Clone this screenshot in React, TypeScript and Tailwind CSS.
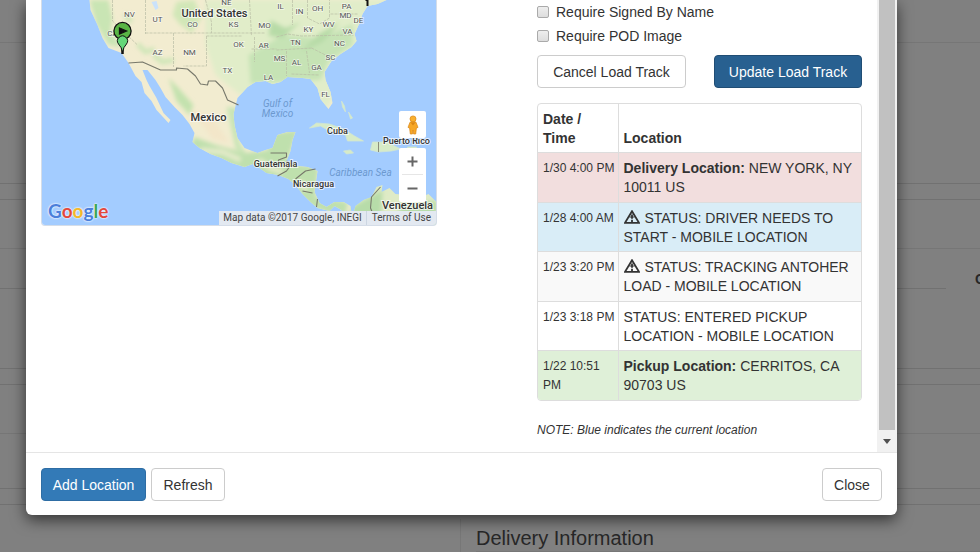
import React from "react";

type LogRow = {
  time: string;
  label?: string;
  text: string;
  warning?: boolean;
  tone: string;
};

const rows: LogRow[] = [
  { time: "1/30 4:00 PM", label: "Delivery Location:", text: "NEW YORK, NY 10011 US", tone: "bg-[#f2dede]" },
  { time: "1/28 4:00 AM", text: "STATUS: DRIVER NEEDS TO START - MOBILE LOCATION", warning: true, tone: "bg-[#d9edf7]" },
  { time: "1/23 3:20 PM", text: "STATUS: TRACKING ANTOHER LOAD - MOBILE LOCATION", warning: true, tone: "bg-[#f9f9f9]" },
  { time: "1/23 3:18 PM", text: "STATUS: ENTERED PICKUP LOCATION - MOBILE LOCATION", tone: "bg-white" },
  { time: "1/22 10:51 PM", label: "Pickup Location:", text: "CERRITOS, CA 90703 US", tone: "bg-[#dff0d8]" },
];

type MapLabel = [string, number, number];

const states: MapLabel[] = [
  ["NV", 129, 17], ["UT", 157, 22], ["NE", 226, 5], ["CO", 192, 27], ["KS", 233, 27],
  ["CA", 112, 36], ["AZ", 157, 55], ["NM", 189, 55], ["OK", 238, 47], ["TX", 227, 73],
  ["IL", 280, 9], ["IN", 299, 14], ["OH", 317, 11], ["PA", 346, 9], ["MD", 345, 18],
  ["DE", 358, 23], ["WV", 328, 27], ["KY", 308, 32], ["VA", 347, 34], ["MO", 264, 28],
  ["TN", 295, 45], ["NC", 339, 46], ["AR", 263, 48], ["SC", 330, 60], ["MS", 279, 61],
  ["AL", 296, 65], ["GA", 316, 70], ["LA", 268, 80], ["FL", 325, 97],
];

const land =
  "M89 0 L90 10 L97 25 L102 38 L108 48 L121 53 L128 63 L135 76 L141 82 L144 93 L151 101 L156 110 L168 123 L170 120 L163 113 L156 98 L149 86 L146 80 L142 70 L147 70 L155 80 L160 88 L165 97 L174 107 L182 115 L189 124 L194 133 L192 142 L199 148 L210 154 L221 158 L231 163 L244 167 L252 164 L259 168 L266 173 L278 175 L288 179 L296 186 L302 194 L310 202 L317 208 L329 211 L334 206 L341 210 L346 216 L351 213 L350 206 L343 202 L334 202 L326 207 L319 203 L314 192 L317 171 L307 167 L297 166 L286 161 L290 151 L292 140 L295 132 L287 132 L277 135 L272 148 L265 150 L257 153 L244 148 L237 138 L234 125 L233 114 L237 98 L247 87 L255 82 L265 81 L272 84 L280 82 L287 77 L302 78 L310 79 L317 88 L320 99 L328 109 L332 103 L330 92 L325 80 L324 72 L331 61 L340 54 L351 47 L356 41 L354 34 L359 23 L362 14 L367 6 L377 4 L386 0 Z";

const southAmerica =
  "M340 225 L352 217 L355 206 L363 200 L371 197 L376 187 L382 185 L381 192 L389 188 L395 194 L408 195 L420 197 L428 194 L436 202 L436 225 Z";

function WarningIcon() {
  return (
    <svg aria-hidden="true" viewBox="0 0 16 14" className="mr-px inline-block h-[14px] w-4 align-[-1px]">
      <path d="M8 1.2 L15 12.8 H1 Z" fill="none" stroke="#333" strokeWidth="1.8" strokeLinejoin="miter" />
      <path d="M8 4.4 V8.8 M8 9.8 V12" stroke="#333" strokeWidth="1.8" />
      <path d="M5.4 7 H10.6" stroke="#333" strokeWidth="1.2" />
    </svg>
  );
}

function Pegman() {
  return (
    <svg aria-hidden="true" viewBox="0 0 14 20" className="h-5 w-[14px]">
      <path d="M4 7.2 Q7 5.8 10 7.2 L12 12.4 L10.4 13 L9.7 19 H7.6 L7 15 L6.4 19 H4.3 L3.6 13 L2 12.4 Z" fill="#f7a828" stroke="#d98718" strokeWidth=".7" />
      <path d="M4.6 7.5 H9.4 L7 10.6 Z" fill="#d98718" />
      <circle cx="7" cy="3.9" r="3" fill="#f9b02f" stroke="#d98718" strokeWidth=".7" />
    </svg>
  );
}

function MapDrawing() {
  return (
    <svg viewBox="41 0 395 225" preserveAspectRatio="xMidYMid slice" className="block h-full w-full font-[Roboto,sans-serif]">
      <defs>
        <clipPath id="landClip">
          <path d={land} />
          <path d={southAmerica} />
        </clipPath>
        <filter id="terrain" x="-10%" y="-10%" width="120%" height="120%">
          <feGaussianBlur stdDeviation="2" />
        </filter>
      </defs>
      <rect x="41" width="395" height="225" fill="#a3ccff" />
      <path d={land} fill="#f2ecd0" />
      <path d={southAmerica} fill="#dfebc6" />
      <g clipPath="url(#landClip)">
        <g filter="url(#terrain)">
          <path d="M205 0 H390 L355 60 L325 110 L305 80 L240 95 L215 75 L205 45 Z" fill="#e1edc9" />
          <path d="M89 0 L108 0 L112 18 L110 32 L121 47 L108 45 L96 25 Z" fill="#c9e5b4" />
          <path d="M248 55 L282 35 L320 38 L352 24 L352 45 L328 62 L320 80 L250 84 Z" fill="#c6e3b5" />
          <path d="M270 20 L285 28 L300 22 L282 38 L268 36 Z M340 22 L322 42 L300 52 L318 34 Z" fill="#b7dba7" />
          <path d="M176 2 L194 0 L201 18 L191 33 L179 24 L172 15 Z" fill="#d1e7b7" />
          <path d="M168 78 L178 88 L193 105 L189 115 L176 101 Z" fill="#c3e2ae" />
          <path d="M194 137 L215 145 L245 153 L267 150 L272 133 L298 130 L286 163 L318 167 L315 197 L348 202 L344 218 L310 207 L260 177 L209 157 L190 146 Z" fill="#bfe0ad" />
          <path d="M200 150 L222 152 L240 160 M258 160 L270 168 L282 172 M300 182 L306 190" fill="none" stroke="#e6ebcb" strokeWidth="5" />
          <path d="M191 110 L212 117 L229 143 L212 139 Z" fill="#f3e6c9" />
          <path d="M226 107 L238 108 L239 142 L246 154 L235 149 Z" fill="#c9e5b6" />
          <path d="M353 206 L382 190 L380 225 H342 Z M398 205 L436 201 V225 H402 Z" fill="#b7dca9" />
          <path d="M137 44 L145 52 L154 49 M153 55 L162 62 L173 60 M124 14 L131 22" fill="none" stroke="#cfe6b8" strokeWidth="5" />
        </g>
        <path d="M151 2 L156 1 L158 8 L155 10 Z" fill="#cae2fa" />
        <g fill="none" stroke="#b9bda5" strokeWidth=".7" strokeDasharray="3 1">
          <path d="M112 0 V21 L137 45 M145 0 V34 M145 33 H265 M173 33 V67 M206 36 V66 H183 M206 36 H241 M205 0 L211 22 V33 M249 0 L251 36 M254 37 V62 M251 49 H276 M276 37 L287 34 L301 36 L353 35 M276 50 L312 48 M286 51 V76 M306 51 L309 73 M291 74 L318 75 M311 48 L329 57 M292 0 V25 M307 0 V18 L319 24 L329 18 V0 M330 14 H357" />
        </g>
      </g>
      <g fill="none" stroke="#77786b" strokeWidth="1.1" strokeLinejoin="round">
        <path d="M128 63 L142 62 L160 70 L176 70 V68 L187 69 L195 76 L200 84 L207 85 L208 81 L215 81 L222 88 L227 100 L238 105" />
        <path d="M270 153 H286 V157 L278 160 L277 167 M286 161 L291 164 L286 171 L277 176 M295 179 L305 171 L315 169 M302 191 L312 193 M317 199 L316 207 M380 187 L371 197 L370 208 L375 220" />
      </g>
      <g fill="#d7ebc7" stroke="#d0e6d2" strokeWidth=".8">
        <path d="M309 128 L316 123 L329 124 L343 129 L354 136 L363 141 L347 141 L345 135 L329 131 L320 126 Z" />
        <path d="M372 142 L386 142 L400 149 L391 151 L378 152 L370 150 Z" />
        <path d="M343 151 L350 150 L353 153 L346 154 Z M407 147 H416 L415 151 H407 Z M341 101 L344 106 L345 112 L342 107 Z M348 112 L352 118 L350 119 Z" />
      </g>
      <path d="M378 142 V152" stroke="#8a8c7c" />
      <g fontSize="8" fill="#555" stroke="#fff" strokeOpacity=".6" strokeWidth="1.5" paintOrder="stroke" textAnchor="middle">
        {states.map(([name, x, y]) => (
          <text key={name} x={x} y={y}>{name}</text>
        ))}
      </g>
      <g fontWeight="500" fill="#333" stroke="#fff" strokeOpacity=".7" strokeWidth="2" paintOrder="stroke" textAnchor="middle">
        <text x="214" y="17" fontSize="11">United States</text>
        <text x="208" y="121" fontSize="11">Mexico</text>
        <text x="337" y="134" fontSize="9">Cuba</text>
        <text x="406" y="144" fontSize="9">Puerto Rico</text>
        <text x="275" y="167" fontSize="9">Guatemala</text>
        <text x="313" y="187" fontSize="9">Nicaragua</text>
        <text x="407" y="209" fontSize="11">Venezuela</text>
      </g>
      <g fontStyle="italic" fill="#6c99cf" textAnchor="middle" fontSize="10">
        <text x="277" y="107">Gulf of</text>
        <text x="277" y="117">Mexico</text>
        <text x="360" y="176">Caribbean Sea</text>
      </g>
      <g stroke="#111" strokeWidth="1.3">
        <path d="M122 41 V54" strokeWidth="2.5" />
        <circle cx="122" cy="31" r="8.6" fill="#59b545" />
        <path d="M119 28 L126 31 L119 34 Z" fill="#111" />
        <path d="M122 52 Q121 47 118 44 A5 5 0 1 1 126 44 Q123 47 122 52 Z" fill="#65d779" strokeWidth="1" />
        <path d="M365 0 H367 V6" fill="none" strokeWidth="2" />
      </g>
    </svg>
  );
}

function MapPanel() {
  return (
    <section aria-label="Map" className="relative h-[226px] min-w-0 flex-1 overflow-hidden rounded-b-sm border border-t-0 border-[#d5dde8]">
      <MapDrawing />
      <div className="absolute bottom-0 left-[6px] font-[Lato,sans-serif] text-[19px] leading-[28px] font-bold [text-shadow:0_0_2px_white,0_0_2px_white]">
        <span className="text-[#4a7fdb]">G</span>
        <span className="text-[#e2483d]">o</span>
        <span className="text-[#f2b82d]">o</span>
        <span className="text-[#4a7fdb]">g</span>
        <span className="text-[#3aa757]">l</span>
        <span className="text-[#e2483d]">e</span>
      </div>
      <div className="absolute right-[10px] bottom-[23px] flex w-[27px] flex-col gap-[10px]">
        <button type="button" aria-label="Street View" className="flex h-[27px] items-center justify-center rounded-xs bg-white">
          <Pegman />
        </button>
        <div className="flex flex-col rounded-xs bg-white px-[3px]">
          <button type="button" aria-label="Zoom in" className="flex h-[27px] items-center justify-center border-b border-[#e6e6e6]">
            <svg viewBox="0 0 11 11" className="size-[11px]"><path d="M5.5 .5 V10.5 M.5 5.5 H10.5" stroke="#666" strokeWidth="2" /></svg>
          </button>
          <button type="button" aria-label="Zoom out" className="flex h-[27px] items-center justify-center">
            <svg viewBox="0 0 11 11" className="size-[11px]"><path d="M.5 5.5 H10.5" stroke="#666" strokeWidth="2" /></svg>
          </button>
        </div>
      </div>
      <div className="absolute right-0 bottom-0 flex h-[14px] items-center bg-[#e3e9f1] font-[Roboto,sans-serif] text-[10px] leading-[14px] text-[#444]">
        <span className="px-1">Map data ©2017 Google, INEGI</span>
        <a href="#terms" className="border-l border-[#ccd6e2] px-[5px]">Terms of Use</a>
      </div>
    </section>
  );
}

function CheckOption({ id, label }: { id: string; label: string }) {
  return (
    <div className="flex h-6 items-center gap-[7px]">
      <input
        id={id}
        type="checkbox"
        className="size-3 appearance-none rounded-xs border border-[#aaa] bg-linear-to-b from-[#eee] to-[#ddd] checked:bg-[#337ab7]"
      />
      <label htmlFor={id}>{label}</label>
    </div>
  );
}

function Button({ children, className }: { children: React.ReactNode; className: string }) {
  return (
    <button type="button" className={`h-[33px] rounded-sm border text-sm whitespace-nowrap ${className}`}>
      {children}
    </button>
  );
}

function LocationTable() {
  return (
    <div className="overflow-hidden rounded-sm border border-[#ddd]">
      <table className="h-[296px] w-full table-fixed border-collapse text-left leading-[19px]">
        <thead>
          <tr className="align-bottom">
            <th className="w-20 border-r border-[#ddd] px-[5px] pt-[6px] pb-1 font-bold">Date / Time</th>
            <th className="px-[5px] pt-[6px] pb-1 font-bold">Location</th>
          </tr>
        </thead>
        <tbody>
          {rows.map((row) => (
            <tr key={row.time} className={`border-t border-[#ddd] align-top ${row.tone}`}>
              <td className="border-r border-[#ddd] pt-[6px] pr-0 pb-1 pl-[5px] text-xs leading-[19px]">{row.time}</td>
              <td className="px-[5px] pt-[6px] pb-1">
                {row.warning && <WarningIcon />}
                {row.label && <strong>{row.label}</strong>} {row.text}
              </td>
            </tr>
          ))}
        </tbody>
      </table>
    </div>
  );
}

function Backdrop() {
  return (
    <div aria-hidden="true" className="flex min-h-[552px] flex-col gap-[15px] bg-[#808080] text-[#272727]">
      <div className="h-[184px] border-b border-[#717171]">
        <div className="h-[43px] border-b border-[#767676]" />
      </div>
      <div className="h-[170px] border-y border-[#717171]">
        <div className="h-[49px] border-b border-[#767676]" />
        <div className="mr-[34px] h-10 border-b border-[#717171]">
          <div className="-mr-[34px] flex h-10 items-end justify-end overflow-hidden">
            <b className="w-[5px] overflow-hidden text-sm">O</b>
          </div>
        </div>
      </div>
      <div className="h-[105px] border-y border-[#717171]">
        <div className="h-[49px] border-b border-[#767676]" />
      </div>
      <div className="flex flex-1 items-stretch border-t border-[#717171] pt-[14px]">
        <div className="w-[460px] shrink-0" />
        <div className="flex-1 border-l border-[#777] pl-[15px]">
          <h2 className="border-b border-[#777] pt-[6px] text-xl leading-[26px] whitespace-nowrap">Delivery Information</h2>
        </div>
      </div>
    </div>
  );
}

export default function App() {
  return (
    <div className="relative overflow-hidden font-['Liberation_Sans',Arial,sans-serif] text-sm text-[#333]">
      <Backdrop />
      <div role="dialog" aria-label="Load Track" className="absolute top-0 right-[83px] left-[26px] rounded-b-md bg-white shadow-[0_5px_15px_rgba(0,0,0,0.6)]">
        <div className="flex">
          <div className="flex min-w-0 flex-1 gap-[100px] px-[15px] pb-3">
            <MapPanel />
            <section className="flex w-[325px] shrink-0 flex-col">
              <CheckOption id="signed-by" label="Require Signed By Name" />
              <CheckOption id="pod-image" label="Require POD Image" />
              <div className="mt-[7px] mb-[15px] flex justify-between">
                <Button className="w-[149px] border-[#ccc] bg-white">Cancel Load Track</Button>
                <Button className="w-[148px] border-[#204d74] bg-[#286090] text-white">Update Load Track</Button>
              </div>
              <LocationTable />
              <p className="mt-5 text-xs leading-[19px] italic">NOTE: Blue indicates the current location</p>
            </section>
          </div>
          <div aria-hidden="true" className="flex w-5 shrink-0 flex-col bg-[#f1f1f1] px-[2px]">
            <div className="flex-1 bg-[#c1c1c1]" />
            <div className="flex h-[22px] items-center justify-center">
              <svg viewBox="0 0 8 5" className="h-[5px] w-2"><path d="M0 0 H8 L4 5 Z" fill="#505050" /></svg>
            </div>
          </div>
        </div>
        <footer className="flex items-center gap-[5px] border-t border-[#e5e5e5] px-[15px] pt-[15px] pb-[14px]">
          <Button className="w-[105px] border-[#2e6da4] bg-[#337ab7] text-white">Add Location</Button>
          <Button className="w-[74px] border-[#ccc] bg-white">Refresh</Button>
          <Button className="ml-auto w-[60px] border-[#ccc] bg-white">Close</Button>
        </footer>
      </div>
    </div>
  );
}
